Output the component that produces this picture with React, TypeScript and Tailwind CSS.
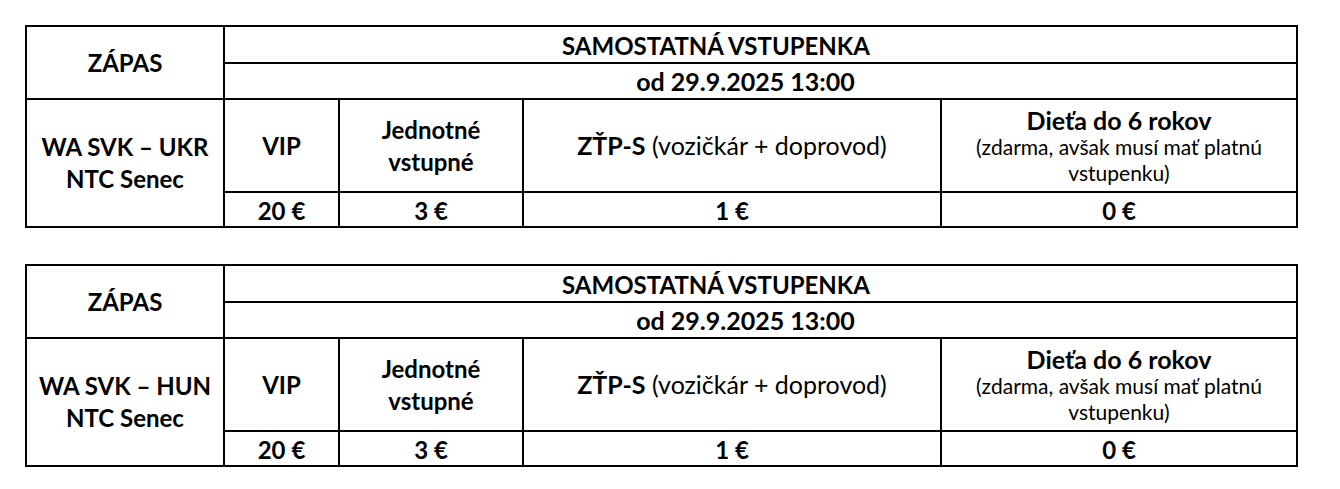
import * as React from 'react'

const font = { fontFamily: 'Lato, "Open Sans", sans-serif' }

function TicketTable({ match }: { match: string }) {
  return (
    <div className="grid w-[1273px] grid-cols-[196px_113px_182px_416px_354px] grid-rows-[35px_34px_91px_33px] gap-[2px] bg-black p-[2px] text-center text-[24px] text-black">
      <div className="row-span-2 flex items-center justify-center bg-white font-bold">ZÁPAS</div>
      <div className="col-span-4 flex items-center justify-center bg-white pr-[89px] pt-[2px] font-bold">
        SAMOSTATNÁ VSTUPENKA
      </div>
      <div className="col-span-4 flex items-center justify-center bg-white pr-[30px] pt-[2px] text-[25px] font-bold">
        od 29.9.2025 13:00
      </div>

      <div className="row-span-2 flex flex-col items-center justify-center bg-white leading-[32px] font-bold">
        <span>{match}</span>
        <span>NTC Senec</span>
      </div>
      <div className="flex items-center justify-center bg-white font-bold">VIP</div>
      <div className="flex flex-col items-center justify-center bg-white leading-[32px] font-bold">
        <span>Jednotné</span>
        <span>vstupné</span>
      </div>
      <div className="flex items-center justify-center bg-white text-[25px]">
        <span>
          <b>ZŤP-S</b> (vozičkár + doprovod)
        </span>
      </div>
      <div className="flex flex-col items-center justify-center bg-white">
        <span className="text-[25px] leading-[28px] font-bold">Dieťa do 6 rokov</span>
        <span className="text-[21px] leading-[26px]">(zdarma, avšak musí mať platnú</span>
        <span className="text-[21px] leading-[26px]">vstupenku)</span>
      </div>

      <div className="flex items-center justify-center bg-white pt-[2px] font-bold">20 €</div>
      <div className="flex items-center justify-center bg-white pt-[2px] font-bold">3 €</div>
      <div className="flex items-center justify-center bg-white pt-[2px] font-bold">1 €</div>
      <div className="flex items-center justify-center bg-white pt-[2px] font-bold">0 €</div>
    </div>
  )
}

export default function App() {
  return (
    <div className="min-h-[489px] w-[1340px] bg-white pl-[25px] pt-[25px]" style={font}>
      <div className="flex flex-col gap-[36px]">
        <TicketTable match="WA SVK – UKR" />
        <TicketTable match="WA SVK – HUN" />
      </div>
    </div>
  )
}
